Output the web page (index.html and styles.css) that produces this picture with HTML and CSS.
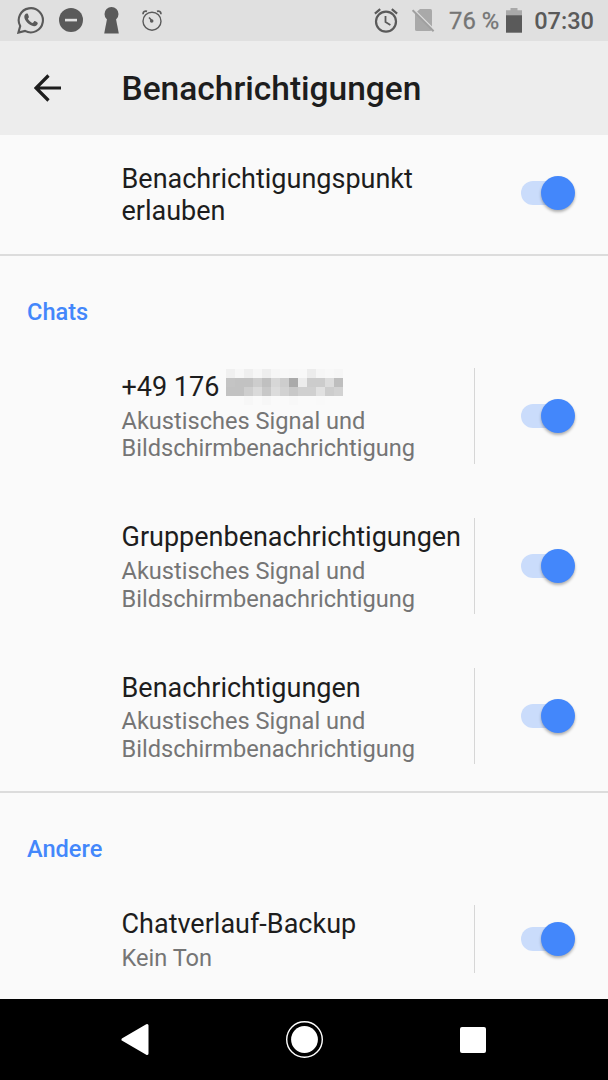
FILE: index.html
```html
<!DOCTYPE html>
<html lang="de">
<head>
    <meta charset="UTF-8">
    <meta name="viewport" content="width=device-width, initial-scale=1.0">
    <title>Benachrichtigungen</title>
    <link rel="stylesheet" href="styles.css">
</head>
<body>
    <div class="screen">
        <div class="status-bar">
            <div class="status-left">
                <svg class="icon-chat" width="28" height="28" viewBox="0 0 28 28">
                    <path d="M1.4 26.6 L3.2 20.1 A12.1 12.1 0 1 1 8 24.9 Z" fill="none" stroke="#5a5a5a" stroke-width="2.1"/>
                    <path d="M9.7 7.4 C8.5 7.4 7.3 8.7 7.3 10.8 C7.3 14.5 12.3 20 17 20.2 C19.2 20.3 20.7 19 20.8 17 C20.8 16.5 18 15 17.6 15.1 C17 15.2 16.3 17.1 15.8 17 C14 16.6 11.5 14.2 10.9 12.7 C10.8 12.2 12 11.5 11.9 10.9 C11.8 10.4 10.9 7.5 10.5 7.4 Z" fill="#5a5a5a"/>
                </svg>
                <svg class="icon-dnd" width="24" height="24" viewBox="0 0 24 24">
                    <circle cx="12" cy="12" r="12" fill="#5a5a5a"/>
                    <rect x="6" y="10.8" width="12" height="2.6" fill="#e0e0e0"/>
                </svg>
                <svg class="icon-keyhole" width="15" height="27" viewBox="0 0 15 27">
                    <circle cx="7.5" cy="7" r="7" fill="#5a5a5a"/>
                    <path d="M3.2 11 H11.8 L14.8 26.5 H0.2 Z" fill="#5a5a5a"/>
                </svg>
                <svg class="icon-clock" width="20" height="21" viewBox="0 0 20 21">
                    <g fill="none" stroke="#5a5a5a">
                        <circle cx="10" cy="11.2" r="9" stroke-width="1.4"/>
                        <path d="M1 4.2 C1 1.5 3 .7 5 1.4 M19 4.2 C19 1.5 17 .7 15 1.4" stroke-width="1.7"/>
                        <path d="M7 7.5 L10 10.8" stroke-width="1.5"/>
                    </g>
                    <circle cx="9.7" cy="11" r="1.8" fill="#5a5a5a"/>
                </svg>
            </div>
            <div class="status-right">
                <svg class="icon-alarm" width="24" height="25" viewBox="0 0 24 25">
                    <g fill="none" stroke="#5a5a5a" stroke-width="2.2">
                        <circle cx="12" cy="13.6" r="10"/>
                        <path d="M.9 5.6 L6.2 1.2 M23.1 5.6 L17.8 1.2"/>
                        <path d="M11.5 8 V14.1 L16.4 17" stroke-width="1.8"/>
                    </g>
                </svg>
                <svg class="icon-nosim" width="24" height="24" viewBox="0 0 24 24">
                    <path d="M8 1 H18.5 Q20 1 20 2.5 V20.5 Q20 23 18 23 H5 Q3 23 3 21.5 V5.5 Z" fill="#a9a9a9"/>
                    <path d="M2 1.4 L22.8 22.2" stroke="#e0e0e0" stroke-width="1.4"/>
                    <path d="M.6 2.2 L21.6 23.2" stroke="#a0a0a0" stroke-width="2"/>
                </svg>
                <span class="percent">76 %</span>
                <svg class="icon-battery" width="16" height="25" viewBox="0 0 16 25">
                    <path d="M4.5 0 H11.5 V2.3 H16 V8 H0 V2.3 H4.5 Z" fill="#a9a9a9"/>
                    <rect y="7.3" width="16" height="17.4" fill="#5a5a5a"/>
                </svg>
                <span class="time">07:30</span>
            </div>
        </div>

        <header class="toolbar">
            <svg class="back" width="28" height="28" viewBox="0 0 28 28">
                <path d="M27 14 H2 M14.5 1.5 L2 14 L14.5 26.5" fill="none" stroke="#1d1d1d" stroke-width="3.2"/>
            </svg>
            <h1>Benachrichtigungen</h1>
        </header>

        <main class="settings">
            <div class="row row-dot">
                <div class="text">
                    <div class="title">Benachrichtigungspunkt<br>erlauben</div>
                </div>
                <div class="switch"><span class="thumb"></span></div>
            </div>

            <section class="group">
                <h2>Chats</h2>
                <div class="row">
                    <div class="text">
                        <div class="title">+49 176
                            <svg class="mosaic" width="118" height="36" viewBox="0 0 118 36" shape-rendering="crispEdges"></svg>
                        </div>
                        <div class="summary">Akustisches Signal und<br>Bildschirmbenachrichtigung</div>
                    </div>
                    <div class="switch"><span class="thumb"></span></div>
                </div>
                <div class="row">
                    <div class="text">
                        <div class="title">Gruppenbenachrichtigungen</div>
                        <div class="summary">Akustisches Signal und<br>Bildschirmbenachrichtigung</div>
                    </div>
                    <div class="switch"><span class="thumb"></span></div>
                </div>
                <div class="row">
                    <div class="text">
                        <div class="title">Benachrichtigungen</div>
                        <div class="summary">Akustisches Signal und<br>Bildschirmbenachrichtigung</div>
                    </div>
                    <div class="switch"><span class="thumb"></span></div>
                </div>
            </section>

            <section class="group">
                <h2>Andere</h2>
                <div class="row row-short">
                    <div class="text">
                        <div class="title">Chatverlauf-Backup</div>
                        <div class="summary">Kein Ton</div>
                    </div>
                    <div class="switch"><span class="thumb"></span></div>
                </div>
            </section>
        </main>

        <nav class="nav-bar">
            <svg width="28" height="34" viewBox="0 0 28 34">
                <path d="M2 16.5 L26 2.5 V30.5 Z" fill="#fff" stroke="#fff" stroke-width="3" stroke-linejoin="round"/>
            </svg>
            <svg width="38" height="38" viewBox="0 0 38 38">
                <circle cx="18.5" cy="18.5" r="17.8" fill="none" stroke="#fff" stroke-width="1.4"/>
                <circle cx="18.5" cy="18.5" r="13.4" fill="#fff"/>
            </svg>
            <svg width="26" height="26" viewBox="0 0 26 26">
                <rect width="26" height="26" rx="2" fill="#fff"/>
            </svg>
        </nav>
    </div>

    <script>
        // grey value per 9px tile of the hidden number
        const tiles = [
            [240, 247, 239, 246, 238, 246, 248, 247, 248, 236, 246, 248, 246],
            [196, 194, 194, 205, 192, 215, 205, 170, 236, 204, 204, 220, 190],
            [194, 194, 206, 218, 200, 220, 210, 200, 208, 208, 225, 205, 210],
            [250, 250, 247, 250, 247, 250, 250, 248, 250, 250, 249, 250, 250]
        ];
        const mosaic = document.querySelector('.mosaic');
        tiles.forEach((line, y) => {
            line.forEach((v, x) => {
                const rect = document.createElementNS('http://www.w3.org/2000/svg', 'rect');
                rect.setAttribute('x', x * 9);
                rect.setAttribute('y', y * 9);
                rect.setAttribute('width', 9);
                rect.setAttribute('height', 9);
                rect.setAttribute('fill', `rgb(${v},${v},${v})`);
                mosaic.appendChild(rect);
            });
        });
    </script>
</body>
</html>
```
FILE: styles.css
```css
* {
    box-sizing: border-box;
}
body {
    margin: 0;
    font-family: Roboto, sans-serif;
    background-color: #fafafa;
    color: #1d1d1d;
}
svg {
    display: block;
    flex: none;
}
.screen {
    display: flex;
    flex-direction: column;
    width: 608px;
    height: 1080px;
    overflow: hidden;
}
.status-bar {
    display: flex;
    justify-content: space-between;
    flex: none;
    height: 41px;
    padding: 0 14px 1px 17px;
    background-color: #e0e0e0;
    color: #5a5a5a;
}
.status-left, .status-right {
    display: flex;
    align-items: center;
}
.icon-dnd {
    margin-left: 14px;
}
.icon-keyhole {
    margin-left: 21px;
}
.icon-clock {
    margin-left: 23px;
}
.icon-nosim {
    margin-left: 14px;
}
.percent {
    margin: 2px 0 0 13px;
    font-size: 23.8px;
    color: #757575;
    white-space: nowrap;
    -webkit-text-stroke: 0.3px #757575;
}
.icon-battery {
    margin-left: 7px;
}
.time {
    margin: 2px 0 0 12px;
    font-size: 23.6px;
    font-weight: 500;
}
.toolbar {
    display: flex;
    align-items: center;
    flex: none;
    height: 94px;
    padding-left: 34px;
    background-color: #ededed;
}
h1 {
    margin: 1px 0 0 59.5px;
    font-size: 33.5px;
    font-weight: 500;
}
.settings {
    flex: 1;
    min-height: 0;
    overflow: hidden;
}
.row {
    display: flex;
    align-items: center;
    height: 150.25px;
    padding: 0 34px 0 121.5px;
}
.text {
    display: flex;
    flex-direction: column;
    justify-content: center;
    width: 353.5px;
    height: 96px;
    padding-top: 2px;
    white-space: nowrap;
    border-right: 1px solid #d6d6d6;
}
.row-dot {
    height: 119px;
    padding-bottom: 4px;
}
.row-dot .text {
    padding-top: 4px;
    border-right: none;
}
.row-short {
    height: 122px;
}
.row-short .text {
    height: 68px;
}
.title {
    display: flex;
    font-size: 27px;
    line-height: 32px;
}
.row-dot .title {
    display: block;
}
.mosaic {
    margin: -2px 0 -2px 6.5px;
}
.summary {
    margin: 4.8px 0 -0.8px;
    font-size: 23.6px;
    line-height: 27.5px;
    color: #757575;
}
.switch {
    position: relative;
    width: 53px;
    height: 24px;
    margin-left: auto;
    border-radius: 12px;
    background-color: #cadcfb;
}
.thumb {
    position: absolute;
    top: -5px;
    right: -1px;
    width: 34px;
    height: 34px;
    border-radius: 50%;
    background-color: #4387fb;
    box-shadow: 0 2px 3px rgba(0,0,0,0.3);
}
.group {
    border-top: 2px solid #dcdcdc;
}
h2 {
    margin: 0;
    padding: 42px 0 14.5px 27px;
    font-size: 23.6px;
    font-weight: 500;
    line-height: 28px;
    color: #4387fb;
}
.nav-bar {
    display: flex;
    align-items: center;
    justify-content: space-between;
    flex: none;
    height: 81px;
    padding: 0 123px 0 121px;
    background-color: #000;
}
.nav-bar svg:last-child {
    margin-right: -1px;
}
```
